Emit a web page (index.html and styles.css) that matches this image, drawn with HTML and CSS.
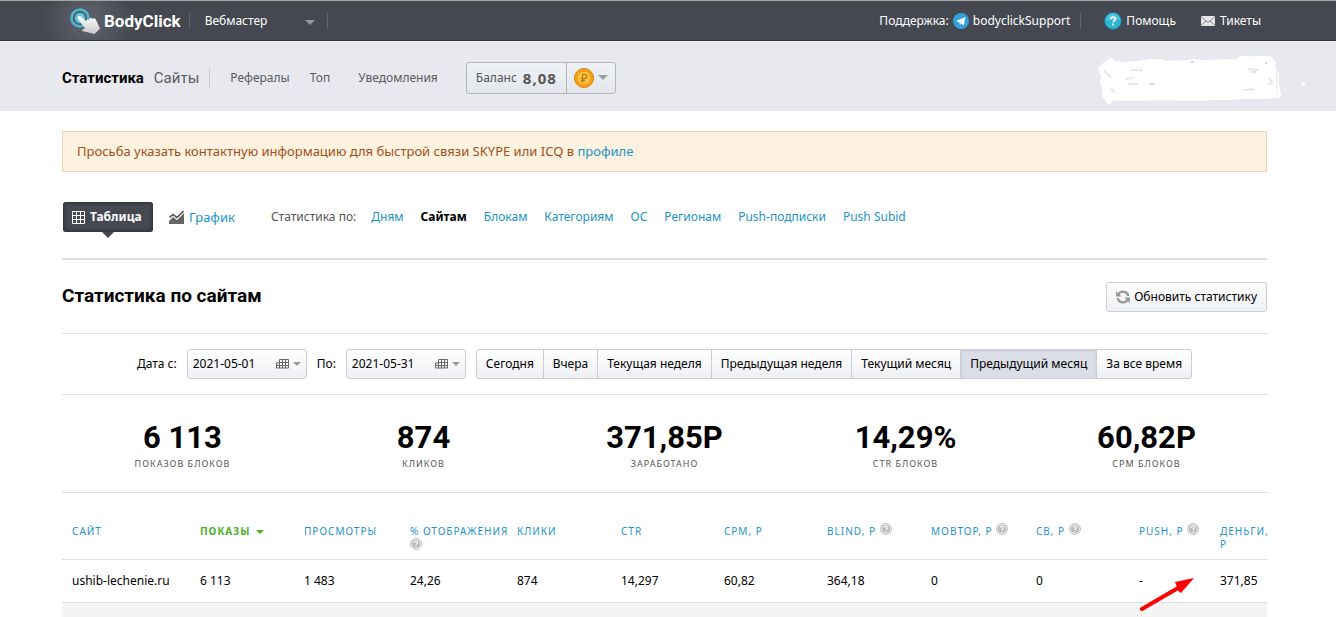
FILE: index.html
```html
<!DOCTYPE html>
<html lang="ru">
<head>
    <meta charset="utf-8">
    <title>Статистика по сайтам</title>
    <link rel="stylesheet" href="styles.css">
</head>
<body>
    <!-- shared icons -->
    <svg class="sprite" width="0" height="0">
        <symbol id="caret" viewBox="0 0 10 5"><path d="M0 0h10L5 5z" fill="currentColor"/></symbol>
        <symbol id="hint" viewBox="0 0 12 12">
            <circle cx="6" cy="6" r="5.4" fill="#fff" stroke="#b5b5b5"/>
            <circle cx="6" cy="6" r="4.1" fill="#b9b9b9"/>
            <path d="M4.4 5C4.4 2.9 7.6 2.9 7.6 4.8 7.6 5.8 6 5.8 6 7M6 8v1.1" fill="none" stroke="#fff" stroke-width="1.2"/>
        </symbol>
        <symbol id="calendar" viewBox="0 0 13 10">
            <path d="M3.5.5h9v8.500h-12v-5h3zM3.500 3.500h9M.5 6.500h12M3.500 3.500v5.500M6.500.5v8.500M9.500.5v8.500" fill="none" stroke="#666"/>
        </symbol>
    </svg>

    <header class="topbar">
        <a class="logo" href="#">
            <svg width="32" height="28" viewBox="0 0 32 28">
                <defs>
                    <linearGradient id="hand" x1="0" y1="0" x2="0" y2="1"><stop offset="0" stop-color="#fff"/><stop offset="1" stop-color="#c9c9c9"/></linearGradient>
                </defs>
                <circle cx="11" cy="11" r="8.500" fill="none" stroke="#46b7d6" stroke-width="2.600"/>
                <circle cx="11" cy="11" r="5.200" fill="#5cc5df"/>
                <path d="M9 9.500c1-1.200 2.300-.7 3.200.2l4.800 4.600c.3-1.600 1.700-2.300 3-1.500.6-2 2.600-2.300 3.600-.9 1.400-1.200 2.900-.4 3.400 1L31 21.500 25.500 27l-9-2.300-2.900-.5c-1-1.300.2-2.600 2.700-2.700L9 12.200c-.8-1-.7-2 0-2.700z" fill="url(#hand)"/>
            </svg>
            <span>BodyClick</span>
        </a>
        <div class="role">
            <select aria-label="Роль">
                <option>Вебмастер</option>
            </select>
            <svg class="caret" width="10" height="5"><use href="#caret"/></svg>
        </div>
        <div class="support">
            <span>Поддержка:</span>
            <a href="#">
                <svg width="16" height="16" viewBox="0 0 16 16"><circle cx="8" cy="8" r="8" fill="#2fa1dc"/><path d="M3 8l9.500-4-1.700 8.500-2.500-1.900-1.400 1.500-.3-2.600z" fill="#fff"/><path d="M6.600 9.500l3.900-3.600-3 4.100-.6 2z" fill="#b9dcf1"/></svg>
                bodyclickSupport
            </a>
        </div>
        <a class="help" href="#">
            <svg width="18" height="18" viewBox="0 0 18 18"><circle cx="9" cy="9" r="8.500" fill="#2fb4d2" stroke="#1d6f8c"/><path d="M2 8a7 7 0 0 1 14 0z" fill="#5fcae0" opacity=".6"/><path d="M6.800 7.200c0-2.900 4.600-2.800 4.600-.2 0 1.500-2.300 1.700-2.300 3.300M9.100 11.500v1.900" fill="none" stroke="#fff" stroke-width="1.700"/></svg>
            Помощь
        </a>
        <a class="tickets" href="#">
            <svg width="14" height="10" viewBox="0 0 14 10"><path d="M0 0h14v10H0z" fill="#e6e6e6"/><path d="M0 .5l7 6 7-6M0 9.500l5-4.500M14 9.500L9 5" fill="none" stroke="#858585"/></svg>
            Тикеты
        </a>
    </header>

    <nav class="menu">
        <a class="menu-main active" href="#">Статистика</a>
        <a class="menu-main" href="#">Сайты</a>
        <span class="menu-sep"></span>
        <a class="referrals" href="#">Рефералы</a>
        <a class="top" href="#">Топ</a>
        <a class="news" href="#">Уведомления</a>
        <div class="balance">
            <span class="balance-sum">Баланс <b>8,08</b></span>
            <button type="button" class="currency" aria-label="Валюта">
                <svg width="20" height="20" viewBox="0 0 20 20"><circle cx="10" cy="10" r="9.500" fill="#f9a51b" stroke="#dd7b0a"/><circle cx="10" cy="10" r="7" fill="#fdc63e" stroke="#f08d10"/><path d="M8.500 14.500V6.300h2.200c2.800 0 2.800 4.200 0 4.200H7M7 12.500h4" fill="none" stroke="#c07a14" stroke-width="1.300"/></svg>
                <svg class="caret" width="10" height="5"><use href="#caret"/></svg>
            </button>
        </div>
        <svg class="scribble" width="212" height="48" viewBox="0 0 212 48">
            <path d="M4 13L8 9l7-5 4 3 8 1 16-1 10-2 12 0 3 2 24-1 6-1 10 1 34-1 3-3 5-1 5 2 7-2 8 1 4 0 4 5-1 5 4 5 0 10 2 13-12 1-11 0-20 0-6 1-18 0-12 1-40-1-34 1-13-1-4 4-5-7 0-8-2-5 2-5z" fill="#fff" stroke="#fff" stroke-width="4" stroke-linejoin="round"/>
            <path d="M8 15l7 6M35 14h8M29 23l8-1M32 28h10M152 13l10 1M160 16h-6M147 34l12-1M173 22l3 5-4 1M15 33l4 4" fill="none" stroke="#e4e7ee" stroke-width="2"/>
            <path d="M44 14h2M54 28h4M95 6h3M169 7h2" stroke="#aab3bd"/>
            <path d="M181 15v21" stroke="#e8e9ee"/>
            <circle cx="207" cy="28" r="2" fill="#fff"/>
        </svg>
    </nav>

    <main class="content">
        <p class="notice">Просьба указать контактную информацию для быстрой связи SKYPE или ICQ в <a href="#">профиле</a></p>

        <div class="tabs">
            <a class="tab tab-active" href="#">
                <svg width="13" height="13" viewBox="0 0 13 13"><path d="M.5.500h12v12H.5zM4.500 0v13M8.500 0v13M0 4.500h13M0 8.500h13" fill="none" stroke="#fff"/></svg>
                Таблица
            </a>
            <a class="tab" href="#">
                <svg width="15" height="14" viewBox="0 0 15 14"><path d="M0 14v-3l4-4 4 3 7-7v11z" fill="#666"/><path d="M0 10l4-4 4 3 7-7" fill="none" stroke="#fff"/><path d="M.5 7.500l3.500-3 4 3L14.500 1" fill="none" stroke="#555" stroke-width="1.600"/></svg>
                График
            </a>
            <span class="by-label">Статистика по:</span>
            <div class="by">
                <a href="#">Дням</a>
                <a class="current" href="#">Сайтам</a>
                <a href="#">Блокам</a>
                <a href="#">Категориям</a>
                <a href="#">ОС</a>
                <a href="#">Регионам</a>
                <a href="#">Push-подписки</a>
                <a href="#">Push Subid</a>
            </div>
        </div>

        <div class="heading">
            <h1>Статистика по сайтам</h1>
            <button type="button" class="btn refresh">
                <svg width="14" height="14" viewBox="0 0 14 14"><path d="M2 5.500A5.300 5.300 0 0 1 12.300 6M12 8.500A5.300 5.300 0 0 1 1.700 8" fill="none" stroke="#999" stroke-width="2.400"/><path d="M0 1v5.500h5.500zM14 13V7.500H8.500z" fill="#999"/></svg>
                Обновить статистику
            </button>
        </div>

        <form class="filter">
            <label for="from">Дата с:</label>
            <div class="date">
                <input type="text" id="from" value="2021-05-01">
                <svg width="13" height="10"><use href="#calendar"/></svg>
                <svg class="caret" width="8" height="4"><use href="#caret"/></svg>
            </div>
            <label for="to">По:</label>
            <div class="date">
                <input type="text" id="to" value="2021-05-31">
                <svg width="13" height="10"><use href="#calendar"/></svg>
                <svg class="caret" width="8" height="4"><use href="#caret"/></svg>
            </div>
            <div class="periods">
                <button type="button" class="btn">Сегодня</button>
                <button type="button" class="btn">Вчера</button>
                <button type="button" class="btn">Текущая неделя</button>
                <button type="button" class="btn">Предыдущая неделя</button>
                <button type="button" class="btn">Текущий месяц</button>
                <button type="button" class="btn pressed">Предыдущий месяц</button>
                <button type="button" class="btn">За все время</button>
            </div>
        </form>

        <div class="totals">
            <div><b>6 113</b><span>показов блоков</span></div>
            <div><b>874</b><span>кликов</span></div>
            <div><b>371,85Р</b><span>заработано</span></div>
            <div><b>14,29%</b><span>CTR блоков</span></div>
            <div><b>60,82Р</b><span>CPM блоков</span></div>
        </div>

        <div class="report">
            <table>
                <colgroup>
                    <col class="c-site"><col class="c-shows"><col class="c-views"><col class="c-rate">
                    <col class="c-clicks"><col class="c-ctr"><col class="c-cpm"><col class="c-blind">
                    <col class="c-mobtop"><col class="c-cb"><col class="c-push"><col class="c-money">
                </colgroup>
                <thead>
                    <tr>
                        <th><a href="#">Сайт</a></th>
                        <th><a class="sorted" href="#">Показы <svg class="caret" width="8" height="4"><use href="#caret"/></svg></a></th>
                        <th><a href="#">Просмотры</a></th>
                        <th><a href="#">% отображения</a><br><svg class="hint-low" width="12" height="12"><use href="#hint"/></svg></th>
                        <th><a href="#">Клики</a></th>
                        <th><a href="#">CTR</a></th>
                        <th><a href="#">CPM, Р</a></th>
                        <th><a href="#">Blind, Р</a> <svg class="hint" width="12" height="12"><use href="#hint"/></svg></th>
                        <th><a href="#">Мobtop, Р</a> <svg class="hint" width="12" height="12"><use href="#hint"/></svg></th>
                        <th><a href="#">CB, Р</a> <svg class="hint" width="12" height="12"><use href="#hint"/></svg></th>
                        <th><a href="#">Push, Р</a> <svg class="hint" width="12" height="12"><use href="#hint"/></svg></th>
                        <th><a href="#">Деньги,<br>Р</a></th>
                    </tr>
                </thead>
                <tbody>
                    <tr>
                        <td>ushib-lechenie.ru</td>
                        <td>6 113</td>
                        <td>1 483</td>
                        <td>24,26</td>
                        <td>874</td>
                        <td>14,297</td>
                        <td>60,82</td>
                        <td>364,18</td>
                        <td>0</td>
                        <td>0</td>
                        <td>-</td>
                        <td>371,85</td>
                    </tr>
                </tbody>
                <tfoot>
                    <tr><td colspan="12"></td></tr>
                </tfoot>
            </table>
            <svg class="pointer" width="56" height="34" viewBox="0 0 56 34"><path d="M2 32L38 11" stroke="#f00" stroke-width="4" stroke-linecap="round"/><path d="M54 1L35 5l2 5-1 2 5 4z" fill="#f00"/></svg>
        </div>
    </main>
</body>
</html>
```
FILE: styles.css
```css
* {
    box-sizing: border-box;
}
body {
    margin: 0;
    background: #fff;
    color: #000;
    font-family: "Noto Sans", "Open Sans", sans-serif;
    font-size: 12px;
    line-height: 16px;
}
a {
    color: #1c94c4;
    text-decoration: none;
}
button, input, select {
    font: inherit;
    color: inherit;
}
svg {
    flex: none;
}
.sprite {
    position: absolute;
}
.caret {
    color: #999;
}

/* top bar */
.topbar {
    display: flex;
    align-items: center;
    height: 41px;
    padding: 0 75px 0 69px;
    border-top: 1px solid #a3a6a5;
    border-bottom: 1px solid #363840;
    background: #454751 radial-gradient(circle at 88px 20px, #62646d, #454751 46px);
    color: #fff;
}
.topbar a {
    display: flex;
    align-items: center;
    color: #fff;
}
.logo {
    gap: 3px;
    font-family: Roboto, sans-serif;
    font-size: 17px;
    font-weight: bold;
}
.role {
    position: relative;
    width: 139px;
    margin-left: 8px;
    border: solid #62646c;
    border-width: 0 1px;
}
.role select {
    width: 100%;
    padding: 0 15px;
    border: 0;
    appearance: none;
    background: none;
}
.role .caret {
    position: absolute;
    top: 7px;
    right: 12px;
}
.support {
    display: flex;
    gap: 4px;
    margin-left: auto;
    padding-right: 10px;
    border-right: 1px solid #62646c;
}
.support a {
    gap: 4px;
}
.help {
    gap: 4px;
    margin-left: 23px;
}
.tickets {
    gap: 5px;
    margin-left: 25px;
}

/* main menu */
.menu {
    position: relative;
    display: flex;
    align-items: center;
    height: 70px;
    padding: 3px 69px 0 62px;
    background: #e8e9ee;
}
.menu a {
    color: #5a5a60;
}
.menu .menu-main {
    margin-right: 10px;
    font-family: Roboto, sans-serif;
    font-size: 15px;
}
.menu .active {
    color: #000;
    font-weight: bold;
}
.menu-sep {
    width: 1px;
    height: 20px;
    margin-right: 20px;
    background: #c9cad1;
}
.referrals {
    margin-right: 20px;
}
.top, .news {
    margin-right: 28px;
}
.balance {
    display: flex;
    height: 32px;
    border: 1px solid #b3b5b9;
    border-radius: 3px;
    background: linear-gradient(#eef1f5, #e3e6eb);
    color: #555;
}
.balance-sum {
    display: flex;
    align-items: center;
    gap: 6px;
    padding: 0 9px;
}
.balance b {
    font-size: 15px;
    letter-spacing: 1px;
}
.currency {
    display: flex;
    align-items: center;
    gap: 4px;
    padding: 0 7px;
    border: 0;
    border-left: 1px solid #b3b5b9;
    background: none;
}
.scribble {
    position: absolute;
    top: 15px;
    right: 28px;
}

/* content */
.content {
    padding: 20px 69px 0 62px;
}
.notice {
    margin: 0;
    padding: 11px 14px;
    border: 1px solid #f0d3b4;
    background: #fcf2df;
    color: #a0501a;
    font-size: 13px;
    line-height: 17px;
}
.tabs {
    display: flex;
    align-items: center;
    padding: 30px 1px 26px;
    border-bottom: 2px solid #dcdce4;
}
.tab {
    display: flex;
    align-items: center;
    gap: 5px;
    height: 30px;
    margin-right: 16px;
    font-size: 13px;
}
.tab-active {
    position: relative;
    width: 90px;
    padding-left: 9px;
    border-radius: 3px;
    background: #454751;
    box-shadow: inset 0 0 4px #22232b;
    color: #fff;
    font-size: 12px;
    font-weight: bold;
}
.tab-active::after {
    content: "";
    position: absolute;
    top: 30px;
    left: 39px;
    border: 6px solid transparent;
    border-top-color: #454751;
    border-bottom: 0;
}
.by-label {
    margin: 0 15px 0 20px;
    color: #555;
}
.by {
    display: flex;
    gap: 17px;
}
.by .current {
    color: #000;
    font-weight: bold;
}
.heading {
    display: flex;
    align-items: center;
    justify-content: space-between;
    padding: 22px 0 21px;
    border-bottom: 1px solid #dcdce4;
}
h1 {
    margin: 0;
    padding-bottom: 3px;
    font-family: Roboto, sans-serif;
    font-size: 19px;
    line-height: 26px;
}
.btn {
    height: 30px;
    padding: 0 9px;
    border: 1px solid #cdced4;
    border-radius: 3px;
    background: linear-gradient(#fff, #eeeff3);
    white-space: nowrap;
}
.refresh {
    display: flex;
    align-items: center;
    gap: 4px;
}

/* date filter */
.filter {
    display: flex;
    align-items: center;
    justify-content: center;
    gap: 10px;
    padding: 15px 0;
    border-bottom: 1px solid #dcdce4;
}
.date {
    display: flex;
    align-items: center;
    gap: 4px;
    width: 120px;
    height: 30px;
    padding: 0 5px;
    border: 1px solid #cdced4;
    border-radius: 3px;
    background: linear-gradient(#fff, #eeeff3);
}
.date input {
    flex: 1;
    min-width: 0;
    padding: 0;
    border: 0;
    background: none;
}
.periods {
    display: flex;
}
.periods .btn {
    margin-left: -1px;
    border-radius: 0;
}
.periods .btn:first-child {
    margin-left: 0;
    border-radius: 3px 0 0 3px;
}
.periods .btn:last-child {
    border-radius: 0 3px 3px 0;
}
.periods .pressed {
    background: #dcdee7;
    box-shadow: inset 0 1px 3px #c3c5cf;
}

/* totals */
.totals {
    display: grid;
    grid-template-columns: repeat(5, 1fr);
    padding: 24px 0 22px;
    border-bottom: 1px solid #dcdce4;
    text-align: center;
}
.totals b {
    display: block;
    font-family: Roboto, sans-serif;
    font-size: 31px;
    line-height: 38px;
}
.totals span {
    display: block;
    color: #555;
    font-size: 9px;
    line-height: 13px;
    letter-spacing: 1px;
    text-transform: uppercase;
}

/* report table */
.report {
    position: relative;
}
table {
    width: 100%;
    border-collapse: collapse;
    table-layout: fixed;
}
.c-site {
    width: 128px;
}
.c-shows, .c-clicks, .c-blind {
    width: 104px;
}
.c-ctr, .c-cpm, .c-cb {
    width: 103px;
}
.c-views {
    width: 106px;
}
.c-rate {
    width: 107px;
}
.c-mobtop {
    width: 105px;
}
.c-push {
    width: 81px;
}
.c-money {
    width: 57px;
}
th, td {
    padding: 0 0 0 10px;
    border-bottom: 1px solid #dcdce4;
    text-align: left;
    white-space: nowrap;
}
th {
    height: 66px;
    padding-top: 32px;
    font-size: 10px;
    font-weight: normal;
    line-height: 13px;
    letter-spacing: 1px;
    text-transform: uppercase;
    vertical-align: top;
}
.sorted, .sorted .caret {
    color: #4caf27;
    font-weight: bold;
}
.sorted .caret {
    margin: 0 0 1px 2px;
}
.hint {
    margin-top: -2px;
    vertical-align: top;
}
.hint-low {
    vertical-align: top;
}
tbody td {
    height: 43px;
}
tfoot td {
    height: 15px;
    border: 0;
    background: #f4f4f2;
}
.pointer {
    position: absolute;
    top: 84px;
    right: 71px;
}
```
